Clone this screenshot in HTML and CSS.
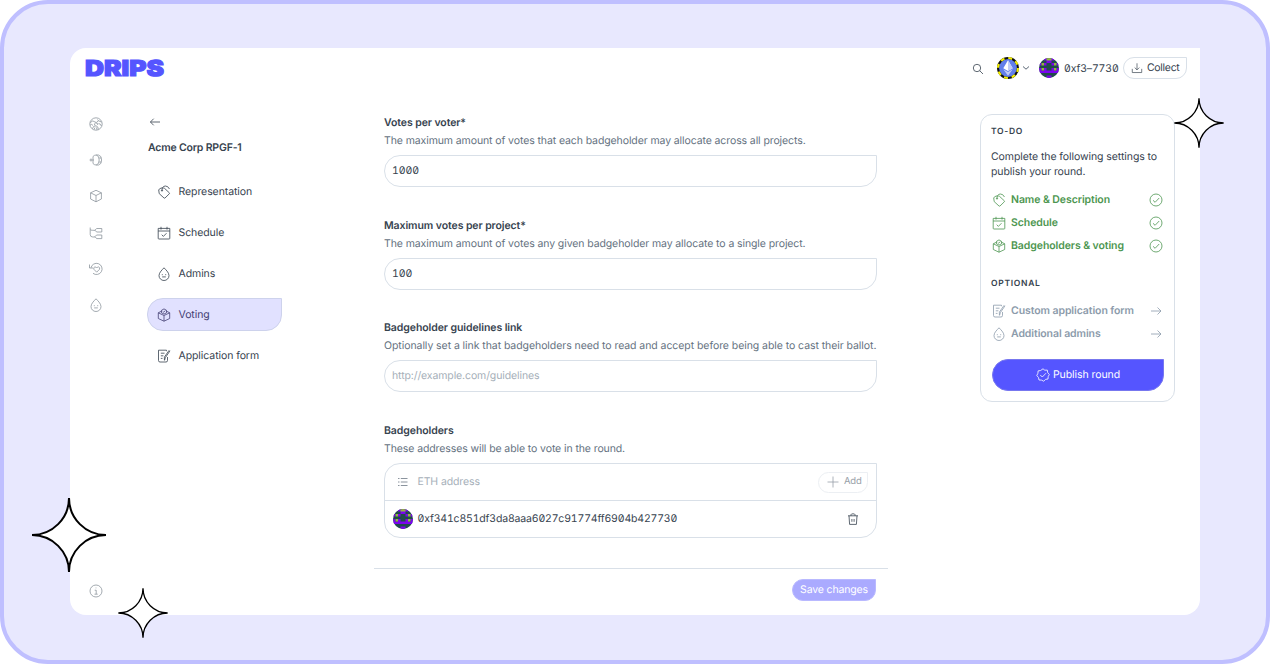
FILE: index.html
```
<!DOCTYPE html>
<html lang="en">
<head>
<meta charset="utf-8">
<title>Drips – Voting settings</title>
<link rel="stylesheet" href="styles.css">
</head>
<body>
<svg class="sprite" aria-hidden="true">
  <symbol id="tag" viewBox="0 0 14 14"><path d="M4 3 1.700 4.700 2.200 8.600 7 13Q7.500 13.400 8 13L12.300 8.800Q12.700 8.300 12.300 7.800L7.700 3.500Q7.200 3 6.500 3ZM5 5.800Q4.800 1.300 8.300 1Q11 .9 12.500 4"/><circle cx="5" cy="5.600" r=".6"/></symbol>
  <symbol id="calendar" viewBox="0 0 14 14"><path d="M1.200 2.400H12.800V12.300Q12.800 13 12.100 13H1.900Q1.200 13 1.200 12.300ZM1.200 5H12.800M4 .8V3.600M10 .8V3.600M4.700 8.700 6.400 10.400 9.500 7.200"/></symbol>
  <symbol id="drop" viewBox="0 0 14 14"><path d="M7 .8C8.500 2.500 12 5.400 12 8.600A5 4.900 0 0 1 2 8.600C2 5.400 5.500 2.500 7 .8ZM5.300 7.200V8.200M8.700 7.200V8.200M5.200 9.900H8.800"/></symbol>
  <symbol id="box" viewBox="0 0 14 14"><path d="M7 1.300 12.400 3.800V10L7 12.800 1.600 10V3.800ZM1.600 3.800 7 6.500 12.400 3.800M7 6.500V12.800"/></symbol>
  <symbol id="ballot" viewBox="0 0 14 14"><path d="M4.400 3.200 1.300 4.800V10.500L7 13.200 12.700 10.500V4.800L9.600 3.200M1.300 4.800 7 7.500 12.700 4.800M7 7.500V13.200M4.500 4.800V2.300L7 .9 9.500 2.300V4.800L7 6.100ZM5.700 3.300 6.700 4.200 8.400 2.500"/></symbol>
  <symbol id="form" viewBox="0 0 14 14"><path d="M9.500 2.200V1.200H1.500V11.500Q1.500 13 3 13H9Q10.500 13 10.500 11.500V8M3.800 4.200H7.500M3.800 6.800H6.400M3.800 9.400H5.500M13 1.800 8.300 8.700 7.600 11.300M12.200 1.200 7.400 8.100V11.300"/></symbol>
  <symbol id="globe" viewBox="0 0 14 14"><circle cx="7" cy="7" r="6.200"/><path d="M1.200 5.500Q4 2.600 6 5Q7 6.500 9.500 3.800L12.500 5M1.200 8Q2.800 6.500 4 8.500M3.500 11.800Q4 8.500 7 8.800Q9 9 9.500 12.500M6 8.500Q4.500 6.500 6.600 6Q9 5.500 8.800 8M9.500 6.500Q11.500 6.500 12.400 9M5 12.500 6 10.500M7.500 10.500 8 12.800M8.500 2.500 9.500 3.800"/></symbol>
  <symbol id="coin" viewBox="0 0 14 14"><path d="M4 3.500Q5.300 2 7.200 2Q10.200 2.600 10.200 7Q10.200 11.400 7.200 12Q5.300 12 4 10.500M7.200 2H9.500Q12.600 2.600 12.600 7Q12.600 11.400 9.500 12H7.200M10.200 5H12.300M10.200 9H12.300M.6 7H5M4 3.500V10.500M2 5.500V8.500"/></symbol>
  <symbol id="tree" viewBox="0 0 14 14"><path d="M1.200 1.500V8.500Q1.200 11 3.800 11H6.200M1.200 3.500Q1.200 4.300 3.800 4.300H6.200"/><path d="M12.800 2.500H7.600L6 4.200 7.600 6H12.800ZM12.800 9H7.600L6 10.600 7.600 12.600H12.800Z"/></symbol>
  <symbol id="history" viewBox="0 0 14 14"><path d="M2 5.800A5.600 5.600 0 1 1 4 11.300M.5 2.500V6H4M7.700 10.200 4.900 7.300Q4.100 5.400 5.900 4.900Q7 4.800 7.700 6Q8.400 4.800 9.500 4.900Q11.300 5.400 10.500 7.300Z"/></symbol>
  <symbol id="info" viewBox="0 0 14 14"><circle cx="7" cy="7" r="6"/><path d="M5.700 6.200H7.200V10M5.500 10.200H8.700M7 3.600V4.300"/></symbol>
  <symbol id="left" viewBox="0 0 14 14"><path d="M12 7H2.500M5.700 3.700 2.400 7 5.700 10.300"/></symbol>
  <symbol id="right" viewBox="0 0 14 14"><path d="M2 7H12M8.500 3.500 12 7 8.500 10.500"/></symbol>
  <symbol id="check" viewBox="0 0 14 14"><circle cx="7" cy="7" r="6"/><path d="M4 7.300 6.100 9.300 10.200 5"/></symbol>
  <symbol id="seal" viewBox="0 0 14 14"><path d="M7 .8 8.800 2.200 11.300 2.100 11.700 4.600 13.300 6.500 12.200 8.600 12 11 9.600 11.400 7.700 13.200 5.500 12.100 3 12 2.500 9.600.8 7.500 1.900 5.300 2.100 2.900 4.600 2.500ZM4.300 7 6.300 9 10 5.200"/></symbol>
  <symbol id="list" viewBox="0 0 14 14"><path d="M4.800 3.500H11.500M4.800 7H11.500M4.800 10.500H11.500M2 3.500H3.500M2 7H3.500M2 10.500H3.500"/></symbol>
  <symbol id="trash" viewBox="0 0 14 14"><path d="M2 3.800H12M3 3.800 3.600 12.400H10.400L11 3.800M5 3.800V2.600Q5 1.800 7 1.800Q9 1.800 9 2.600V3.800M5.900 7V9.800M8.100 7V9.800"/></symbol>
  <symbol id="search" viewBox="0 0 14 14"><circle cx="6" cy="6" r="3.700"/><path d="M8.800 8.800 12 12"/></symbol>
  <symbol id="download" viewBox="0 0 14 14"><path d="M7 1.500V9M4.300 6.500 7 9.200 9.700 6.500M1.500 8V12.300H12.500V8"/></symbol>
  <symbol id="plus" viewBox="0 0 14 14"><path d="M7 1.500V12.500M1.500 7H12.500"/></symbol>
  <symbol id="star" viewBox="-39 -39 78 78"><path d="M0-37A37 37 0 0 0 37 0A37 37 0 0 0 0 37A37 37 0 0 0-37 0A37 37 0 0 0 0-37Z"/></symbol>
  <symbol id="blockie" viewBox="0 0 8 8"><path fill="#214a4b" d="M0 0H8V8H0Z"/><path fill="#7a04ee" d="M2 0H6V1H2ZM3 1H5V2H3ZM0 2H1V3H0ZM2 2H3V3H2ZM5 2H6V3H5ZM7 2H8V3H7ZM0 4H1V5H0ZM2 4H3V5H2ZM5 4H6V5H5ZM7 4H8V5H7ZM0 5H8V6H0ZM3 7H5V8H3Z"/><path fill="#91b83e" d="M3 0H5V1H3ZM1 2H2V3H1ZM6 2H7V3H6ZM1 4H2V5H1ZM6 4H7V5H6Z"/></symbol>
</svg>
<div class="frame">
  <main class="app">
    <header class="topbar">
      <svg class="logo" viewBox="0 0 80 20"><text x="0" y="17.500" textLength="79" lengthAdjust="spacingAndGlyphs">DRIPS</text></svg>
      <div class="account">
        <svg class="icon search"><use href="#search"/></svg>
        <svg class="network" viewBox="0 0 21 21"><circle cx="10.500" cy="10.500" r="9.500" fill="#627eea" stroke="#111" stroke-width="2"/><circle cx="10.500" cy="10.500" r="9.500" fill="none" stroke="#f6f000" stroke-width="2" stroke-dasharray="3.730 3.730"/><path fill="#fff" d="M10.500 3 15 10.700 10.500 13.300 6 10.700Z"/><path fill="#c0cbf6" d="M10.500 3 15 10.700 10.500 13.300ZM6 11.700 10.500 14.300 15 11.700 10.500 18Z"/></svg>
        <svg class="chevron" viewBox="0 0 8 6"><path d="M1 1.500 4 4.200 7 1.500"/></svg>
        <svg class="avatar"><use href="#blockie"/></svg>
        <span class="address">0xf3–7730</span>
        <button class="collect"><svg class="icon"><use href="#download"/></svg>Collect</button>
      </div>
    </header>
    <div class="body">
      <nav class="rail">
        <svg class="icon"><use href="#globe"/></svg>
        <svg class="icon"><use href="#coin"/></svg>
        <svg class="icon"><use href="#box"/></svg>
        <svg class="icon"><use href="#tree"/></svg>
        <svg class="icon"><use href="#history"/></svg>
        <svg class="icon"><use href="#drop"/></svg>
        <svg class="icon info"><use href="#info"/></svg>
      </nav>
      <nav class="settings">
        <svg class="icon back"><use href="#left"/></svg>
        <h1>Acme Corp RPGF-1</h1>
        <ul>
          <li><svg class="icon"><use href="#tag"/></svg><span>Representation</span></li>
          <li><svg class="icon"><use href="#calendar"/></svg><span>Schedule</span></li>
          <li><svg class="icon"><use href="#drop"/></svg><span>Admins</span></li>
          <li class="active"><svg class="icon"><use href="#ballot"/></svg><span>Voting</span></li>
          <li><svg class="icon"><use href="#form"/></svg><span>Application form</span></li>
        </ul>
      </nav>
      <section class="form">
        <div class="field">
          <h2>Votes per voter*</h2>
          <p>The maximum amount of votes that each badgeholder may allocate across all projects.</p>
          <div class="input number">1000</div>
        </div>
        <div class="field">
          <h2>Maximum votes per project*</h2>
          <p>The maximum amount of votes any given badgeholder may allocate to a single project.</p>
          <div class="input number">100</div>
        </div>
        <div class="field link">
          <h2>Badgeholder guidelines link</h2>
          <p>Optionally set a link that badgeholders need to read and accept before being able to cast their ballot.</p>
          <div class="input placeholder">http://example.com/guidelines</div>
        </div>
        <div class="field">
          <h2>Badgeholders</h2>
          <p>These addresses will be able to vote in the round.</p>
          <div class="list">
            <div class="row entry"><svg class="icon"><use href="#list"/></svg><span class="placeholder">ETH address</span><button class="add"><svg class="icon"><use href="#plus"/></svg>Add</button></div>
            <div class="row"><svg class="avatar"><use href="#blockie"/></svg><span class="hash">0xf341c851df3da8aaa6027c91774ff6904b427730</span><svg class="icon trash"><use href="#trash"/></svg></div>
          </div>
        </div>
        <footer><button class="save">Save changes</button></footer>
      </section>
      <aside class="todo">
        <h3>TO-DO</h3>
        <p>Complete the following settings to<br>publish your round.</p>
        <ul class="done">
          <li><svg class="icon"><use href="#tag"/></svg><span>Name &amp; Description</span><svg class="icon end"><use href="#check"/></svg></li>
          <li><svg class="icon"><use href="#calendar"/></svg><span>Schedule</span><svg class="icon end"><use href="#check"/></svg></li>
          <li><svg class="icon"><use href="#ballot"/></svg><span>Badgeholders &amp; voting</span><svg class="icon end"><use href="#check"/></svg></li>
        </ul>
        <h3>OPTIONAL</h3>
        <ul class="optional">
          <li><svg class="icon"><use href="#form"/></svg><span>Custom application form</span><svg class="icon end"><use href="#right"/></svg></li>
          <li><svg class="icon"><use href="#drop"/></svg><span>Additional admins</span><svg class="icon end"><use href="#right"/></svg></li>
        </ul>
        <button class="publish"><svg class="icon"><use href="#seal"/></svg>Publish round</button>
      </aside>
    </div>
  </main>
  <svg class="star star-left"><use href="#star"/></svg>
  <svg class="star star-bottom"><use href="#star"/></svg>
  <svg class="star star-right"><use href="#star"/></svg>
</div>
</body>
</html>
```
FILE: styles.css
```
* { box-sizing: border-box; margin: 0; padding: 0; }
body { background: #fff; font: 400 10.5px/16px Inter, "Liberation Sans", sans-serif; letter-spacing: -.08px; color: #37434f; text-rendering: geometricPrecision; }
ul { list-style: none; }
button { font: inherit; letter-spacing: inherit; color: inherit; background: #fff; border: 1px solid #d9e0e8; display: flex; align-items: center; text-rendering: inherit; }
.sprite { display: none; }
.icon { width: 14px; height: 14px; flex: none; fill: none; stroke: currentColor; stroke-width: .8; stroke-linejoin: round; }

.frame { position: relative; width: 1270px; height: 664px; padding: 44px 66px; border: 4px solid #bfbfff; border-radius: 48px; background: #e8e8fe; overflow: hidden; }
.app { width: 1130px; height: 567px; background: #fff; border-radius: 16px 0 16px 16px; display: flex; flex-direction: column; }

.topbar { height: 40px; display: flex; justify-content: space-between; align-items: center; padding: 0 13px 0 15px; }
.logo { width: 80px; height: 20px; overflow: visible; }
.logo text { font: 900 22px Inter, sans-serif; letter-spacing: 0; fill: #5555ff; stroke: #5555ff; stroke-width: 1.1; }
.account { display: flex; align-items: center; }
.search { margin-right: 12px; position: relative; top: 1px; }
.network { width: 22px; height: 22px; margin-right: 3px; }
.chevron { width: 8px; height: 6px; fill: none; stroke: #5b6775; margin-right: 9px; }
.avatar { width: 20px; height: 20px; border-radius: 50%; flex: none; }
.address { width: 55px; margin: 1px 4px 0 5px; white-space: nowrap; letter-spacing: -.15px; font-feature-settings: "zero", "tnum"; }
.collect { height: 22px; width: 64px; padding: 0 0 0 7px; gap: 4px; border-radius: 11px 0 11px 11px; letter-spacing: -.3px; }
.collect .icon { width: 12px; height: 12px; }

.body { flex: 1; display: grid; grid-template-columns: 77px 227px 514px 195px; align-items: start; }
.body > .todo { margin-left: 92px; }
.rail { height: 527px; display: flex; flex-direction: column; align-items: center; gap: 22.200px; padding: 29px 0 17px; width: 51px; color: #8d959d; }
.rail .info { margin-top: auto; }

.settings { width: 135px; padding-top: 27px; }
.back { display: block; margin-left: 1px; }
.settings h1 { margin: 10px 0 19px 1px; font-size: 10.5px; line-height: 17px; font-weight: 600; letter-spacing: -.18px; }
.settings ul { display: flex; flex-direction: column; gap: 8.100px; }
.settings li { height: 33px; padding-left: 8.5px; display: flex; align-items: center; gap: 8px; border: 1px solid transparent; }
.settings .active { background: #e1e1ff; border-color: #cdd2ec; border-radius: 16px 0 16px 16px; color: #444073; }

.form { padding-top: 27px; }
.field { margin: 0 11px 0 10px; height: 102.600px; }
.field h2 { font-size: 10.5px; line-height: 16px; font-weight: 600; }
.field p { margin: 2px 0 6px; color: #65727f; white-space: nowrap; letter-spacing: -.1px; }
.link p { letter-spacing: -.065px; }
.input { height: 32px; border: 1px solid #d9e0e8; border-radius: 16px 0 16px 16px; padding: 0 7px; line-height: 30px; }
.number, .hash { font-feature-settings: "zero", "tnum"; }
.hash { letter-spacing: -.165px; }
.placeholder { color: #a6afb9; letter-spacing: -.11px; }
.list { height: 75px; border: 1px solid #d9e0e8; border-radius: 16px 0 16px 16px; }
.row { height: 36px; display: flex; align-items: center; padding: 0 8px 0 7.5px; gap: 5px; }
.entry { height: 37px; padding-top: 1px; border-bottom: 1px solid #d9e0e8; }
.entry > .icon { margin: 0 3px; stroke-width: 1.200; color: #8b949e; }
.add { margin-left: auto; height: 21px; width: 50px; padding: 0 0 0 7px; gap: 4px; border-color: #eceff3; border-radius: 11px 0 11px 11px; font-size: 9.5px; letter-spacing: -.2px; color: #98a0a8; }
.trash { margin: 0 8px 0 auto; }
.form footer { margin-top: 42.500px; border-top: 1px solid #d9e0e8; padding: 10px 12px 0; display: flex; justify-content: flex-end; }
.save { height: 22px; width: 84px; justify-content: center; border-color: #b9b9ff; border-radius: 11px 0 11px 11px; background: #aaaaff; color: #fff; letter-spacing: -.15px; }

.todo { margin-top: 26px; width: 195px; height: 288px; border: 1px solid #d9e0e8; border-radius: 12px; padding: 9px 11px 0 10px; }
.todo h3 { font-size: 8.500px; font-weight: 600; letter-spacing: .7px; }
.todo p { margin: 9px 0 9px; line-height: 15px; white-space: nowrap; }
.todo li { height: 23px; display: flex; align-items: center; gap: 5px; font-weight: 600; padding-left: 1px; }
.todo .end { margin-left: auto; }
.done { color: #4d9650; margin-bottom: 19px; }
.optional { color: #8c9bab; margin: 7px 0 14px; }
.publish { width: 172px; height: 32px; margin-left: 1px; justify-content: center; gap: 3px; border: 1px solid #7777ef; border-radius: 16px 0 16px 16px; background: #5555ff; color: #fff; }

.star { position: absolute; fill: #fff; stroke: #000; stroke-width: 2; overflow: visible; }
.star-left { left: 26px; top: 492px; width: 78px; height: 78px; }
.star-bottom { left: 113px; top: 583px; width: 52px; height: 52px; }
.star-right { left: 1169px; top: 93px; width: 52px; height: 52px; }
```
